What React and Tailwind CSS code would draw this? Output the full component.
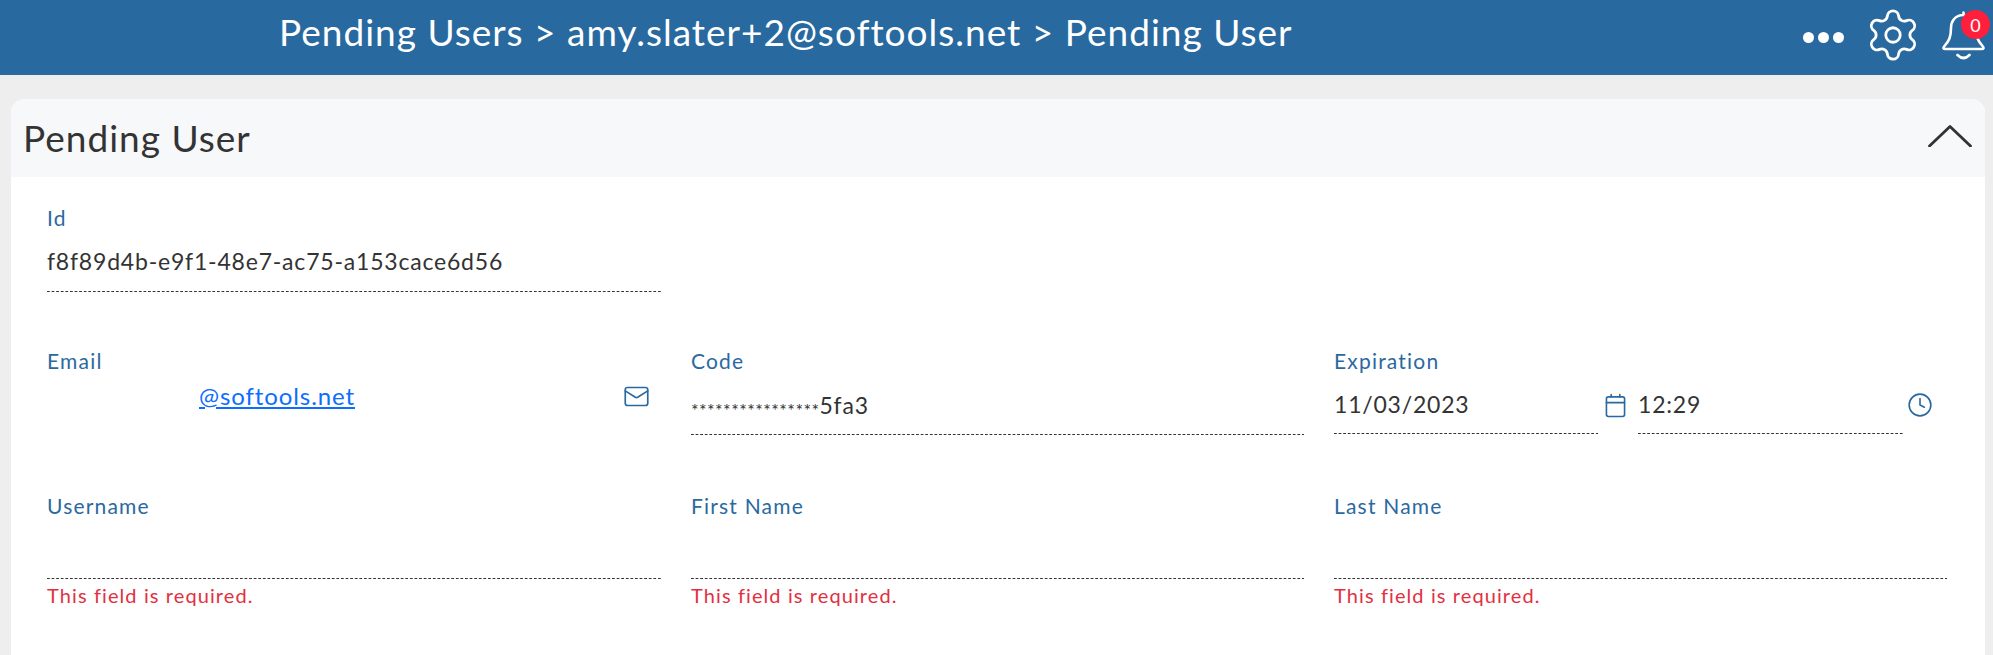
import { Settings, Mail, Clock } from 'lucide-react';

const FONT = "font-['Lato','Open_Sans',sans-serif]";
// the dashed underline of the form fields, 3px on / 1.6px off
const DASHES = "bg-[linear-gradient(to_right,#333_65%,transparent_65%)] bg-[length:4.6px_1px] bg-[position:left_bottom] bg-repeat-x";

function Label({ children }) {
  return <div className="h-6 text-[21px] leading-6 tracking-[1.2px] text-[#2a69a0]">{children}</div>;
}

function Field({ label, value, error, height = 'h-[62px]' }) {
  return (
    <div>
      <Label>{label}</Label>
      <div className={`flex ${height} items-center ${DASHES} text-[23px] tracking-[0.8px] text-[#333]`}>
        {value}
      </div>
      {error && <div className="mt-1 h-6 text-[20px] leading-6 tracking-[1.1px] text-[#e2303f]">This field is required.</div>}
    </div>
  );
}

function CalendarIcon() {
  return (
    <svg viewBox="0 0 22 26" className="h-[25px] w-[21px]" fill="none" stroke="#2a69a0" strokeWidth="1.7" strokeLinecap="round" strokeLinejoin="round">
      <rect x="1.5" y="4" width="19" height="20.5" rx="2" />
      <path d="M1.5 10h19M6.500 1.500V4M15.500 1.500V4" />
    </svg>
  );
}

function BellIcon() {
  return (
    <svg viewBox="0 0 43 49" className="h-[49px] w-[43px]" fill="none" stroke="#fff" strokeWidth="2.6" strokeLinecap="round" strokeLinejoin="round">
      <path d="M21.500 1.500V4C12.500 4 9 11 9 17C9 26 7 30 2.500 35Q0 38 3.500 38H39.500Q43 38 40.500 35C36 30 34 26 34 17C34 11 30.500 4 21.500 4" />
      <path d="M15.500 44Q21.500 50 27.500 44" />
    </svg>
  );
}

export default function App() {
  return (
    <div className={`${FONT} h-[655px] w-[1993px] overflow-hidden bg-[#eeeeee]`}>
      <header className="flex h-[75px] items-center bg-[#2869a0] text-white">
        <h1 className="ml-[279px] pb-[12px] text-[37px] tracking-[1px] whitespace-nowrap">
          Pending Users &gt; amy.slater+2@softools.net &gt; Pending User
        </h1>
        <div className="ml-auto flex items-center">
          <div className="flex gap-[4px]">
            <span className="size-[11px] rounded-full bg-white" />
            <span className="size-[11px] rounded-full bg-white" />
            <span className="size-[11px] rounded-full bg-white" />
          </div>
          <Settings className="mb-[5px] ml-[20px] size-[58px]" strokeWidth={1.15} />
          <div className="relative mr-[8px] mb-[4px] ml-[20px] h-[49px] w-[43px]">
            <BellIcon />
            <span className="absolute -top-px -right-[5px] flex size-[29px] items-center justify-center rounded-full bg-[#ff1f3d] text-[18px] leading-none">0</span>
          </div>
        </div>
      </header>

      <main className="mt-6 mr-2 ml-[11px] h-[556px] rounded-t-[14px] bg-white">
        <div className="flex h-[78px] items-center justify-between rounded-t-[14px] bg-[#f7f8fa] pr-[13px] pl-[12px]">
          <h2 className="text-[37px] tracking-[1px] text-[#333]">Pending User</h2>
          <svg viewBox="0 0 44 22" className="mb-1 h-[22px] w-[44px]" fill="none" stroke="#333" strokeWidth="2.8" strokeLinecap="round" strokeLinejoin="round">
            <path d="M1.500 21 22 1.500 42.500 21" />
          </svg>
        </div>

        <div className="pt-[29px] pl-[36px]">
          <div className="grid grid-cols-[614px_613px_613px] gap-x-[30px]">
            <Field label="Id" value="f8f89d4b-e9f1-48e7-ac75-a153cace6d56" />
          </div>

          <div className="mt-[57px] grid grid-cols-[614px_613px_613px] gap-x-[30px]">
            <div>
              <Label>Email</Label>
              <div className="flex h-[46px] items-center justify-between pr-[11px] pl-[152px]">
                <a href="#" className="text-[24px] tracking-[0.9px] text-[#0d6efd] underline">@softools.net</a>
                <Mail className="size-[27px] text-[#2a69a0]" strokeWidth={1.5} />
              </div>
            </div>
            <Field
              label="Code"
              value={<span className="pt-[2px]"><span className="relative top-[3px] text-[18px] tracking-[0.38px]">****************</span>5fa3</span>}
            />
            <div>
              <Label>Expiration</Label>
              <div className="flex h-[61px] items-stretch">
                <div className={`flex w-[264px] items-center pt-[2px] ${DASHES} text-[23px] tracking-[0.8px] text-[#333]`}>11/03/2023</div>
                <div className="mt-[20px] ml-[7px] w-[33px]"><CalendarIcon /></div>
                <div className={`flex w-[265px] items-center pt-[2px] ${DASHES} text-[23px] tracking-[0.8px] text-[#333]`}>12:29</div>
                <Clock className="mt-[19px] ml-[4px] size-[26px] text-[#2a69a0]" strokeWidth={1.5} />
              </div>
            </div>
          </div>

          <div className="mt-[59px] grid grid-cols-[614px_613px_613px] gap-x-[30px]">
            <Field label="Username" height="h-[61px]" error />
            <Field label="First Name" height="h-[61px]" error />
            <Field label="Last Name" height="h-[61px]" error />
          </div>
        </div>
      </main>
    </div>
  );
}
